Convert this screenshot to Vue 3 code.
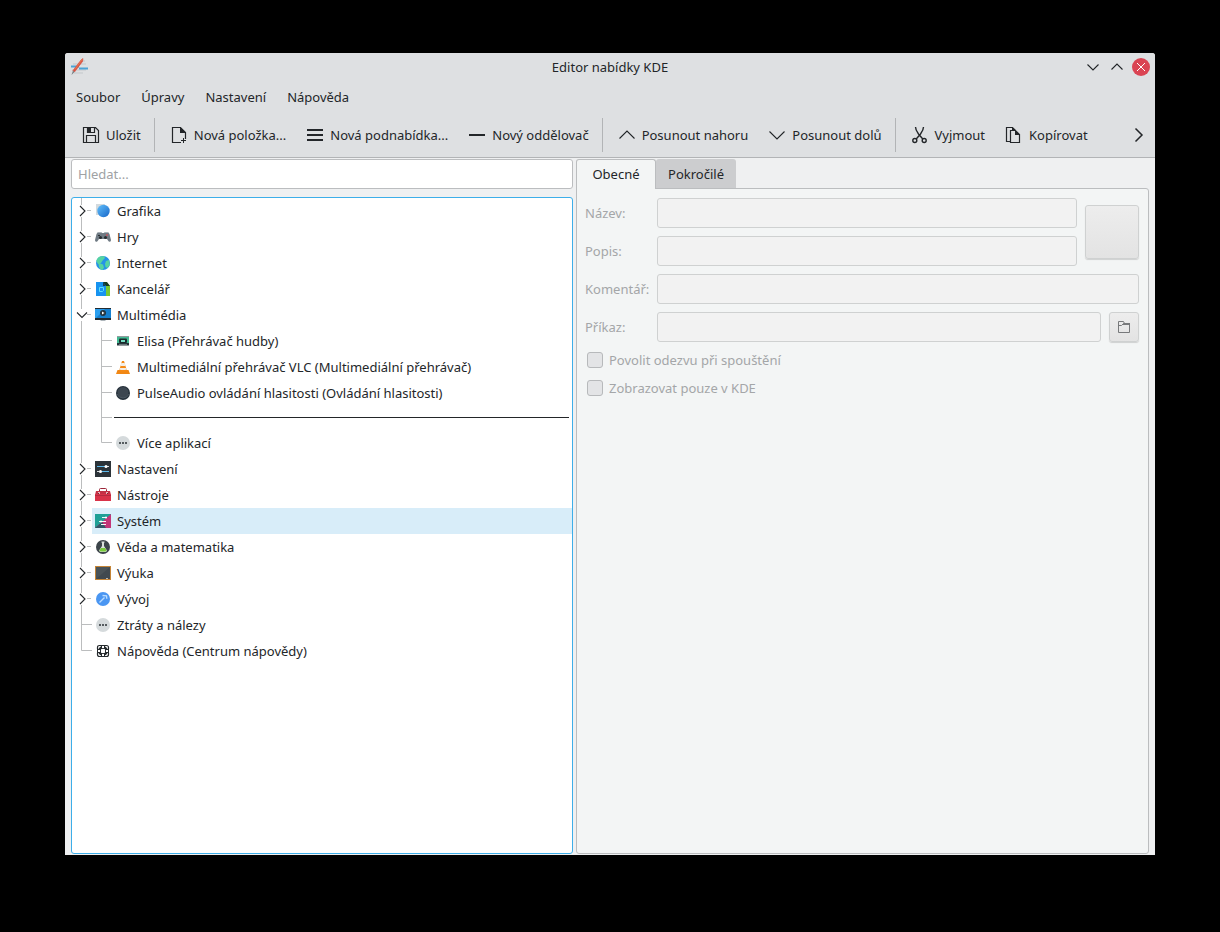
<script setup>
import { ref } from 'vue'

const art = {
  save: '<path d="M3.500 3.500h12l3 3v12h-15zM7.500 3.500v5h7v-5M6.500 18.500v-7h9v7" fill="none" stroke="#232629" stroke-width="1.200"/><path d="M7 3h4v5H7z" fill="#232629"/>',
  newItem: '<path d="M13 18.500H4.500v-15h8l5 5V15" fill="none" stroke="#232629" stroke-width="1.200"/><path d="M12 3l6 6h-6zM15 14h1v5h-1zM13 16h5v1h-5z" fill="#232629"/>',
  submenu: '<path d="M3 5h16v2H3zM3 10h16v2H3zM3 15h16v2H3z" fill="#232629"/>',
  line: '<path d="M3 10h16v2H3z" fill="#232629"/>',
  up: '<path d="M3.500 14.500L11 7l7.500 7.500" fill="none" stroke="#232629" stroke-width="1.100"/>',
  down: '<path d="M3.500 7.500L11 15l7.500-7.500" fill="none" stroke="#232629" stroke-width="1.100"/>',
  cut: '<g fill="none" stroke="#232629" stroke-width="1.400"><circle cx="5.800" cy="16.500" r="2"/><circle cx="15.200" cy="16.500" r="2"/><path d="M6.500 3c0 3 1.500 5 3 7l4.300 5M14.500 3c0 3-1.500 5-3 7l-4.300 5"/></g>',
  copy: '<path d="M7 17.500H3.500v-14h6l3 3M7.500 6.500h5l4 4v8h-9z" fill="none" stroke="#232629" stroke-width="1.200"/><path d="M12 6l5 5h-5zM9 3l4 4H9z" fill="#232629"/>',
  graphics: '<defs><linearGradient id="gBall" x1="0" y1="0" x2="1" y2="1"><stop offset="0" stop-color="#62c0fb"/><stop offset="1" stop-color="#1766c9"/></linearGradient></defs><path d="M1 1h9v11H1z" fill="#d3dade"/><circle cx="8.500" cy="8" r="6.200" fill="url(#gBall)"/>',
  games: '<path d="M3 3h3l1 1h2l1-1h3l1.500 2L16 11c0 2-2 2.500-3 .5L12 10H4l-1 1.500c-1 2-3 1.500-3-.5L1.500 5z" fill="#707b84"/><path d="M3 3h3v1H3zM10 3h3v1h-3z" fill="#a8b0b5"/><circle cx="5.500" cy="8.500" r="1.500" fill="#272d31"/><circle cx="10.500" cy="8.500" r="1.500" fill="#272d31"/><path d="M3 6h2v1H3z" fill="#2d3337"/><circle cx="12" cy="6" r=".9" fill="#d0525c"/>',
  internet: '<circle cx="8" cy="8" r="7" fill="#2593e7"/><path d="M5 1.500l4-.5 1 2-2 2-2 3-3 1-1.700-3C2 3.500 3.500 2 5 1.500zM11 6l3-1 .5 2 .3 3-2.300 3-2-1-.5-3zM4 8l4 1.500 1 3L7.500 15C4.500 14.500 4 12 3.500 9z" fill="#55d3a2"/>',
  office: '<path d="M7 1h4l4 4v10H7z" fill="#78c832"/><path d="M7 1h5l3 4h-4z" fill="#173c24"/><path d="M1 1h7l3 4v10H1z" fill="#1793f0"/><path d="M8 1l3 4H8z" fill="#153e58"/><path d="M4.500 6.500h4v3l-1 1h-3z" fill="none" stroke="#5be1fb"/>',
  multimedia: '<path d="M0 1h16v12H0z" fill="#232b31"/><path d="M0 2h16v9H0z" fill="#2b9fef"/><path d="M1 11l9-9h6v9z" fill="#1680cf"/><path d="M6 13h4l1 1H5z" fill="#aeb6bb"/><circle cx="8" cy="6" r="3" fill="#263640"/><path d="M7 4.500v3L9.500 6z" fill="#fff"/>',
  elisa: '<path d="M2 3.500h12v9H2z" fill="#26343a"/><path d="M2 4h12v6H2z" fill="#42b992"/><rect x="4" y="5.500" width="8" height="4.500" rx="1" fill="#182a2b"/><path d="M6 7h4v2H6z" fill="#74dcc3"/><path d="M4 11h8v1H4z" fill="#697779"/>',
  vlc: '<path d="M2.500 11h11l1.500 4H1z" fill="#f18714"/><path d="M7 2h2l3 10c-1 1-7 1-8 0z" fill="#f58a16"/><path d="M6.300 4h3.400l.9 3H5.400zM4.800 9h6.400l.5 1.500c-2 .8-5.400.8-7.400 0z" fill="#f2eee8"/>',
  pulse: '<circle cx="8" cy="8" r="7" fill="#25303a"/><circle cx="8" cy="7.500" r="5.500" fill="#3c4650"/><path d="M2 9a6.500 6.500 0 0 0 12 0" fill="none" stroke="#4b5761"/>',
  more: '<circle cx="8" cy="8" r="7" fill="#d5dadc"/><path d="M4 7h2v2H4zM7 7h2v2H7zM10 7h2v2h-2z" fill="#555b5f"/>',
  settings: '<path d="M0 0h16v16H0z" fill="#2c3339"/><path d="M2 5h8v1H2zM7 10h7v1H7z" fill="#5bb9ec"/><path d="M12 5h2v1h-2zM2 10h2v1H2z" fill="#dce1e4"/><circle cx="11" cy="5.500" r="1.500" fill="#fff"/><circle cx="5.500" cy="10.500" r="1.500" fill="#fff"/>',
  tools: '<path d="M4.500 5V2.500q0-1 1-1h5q1 0 1 1V5" fill="none" stroke="#9c2538"/><path d="M1 4h14l1 4H0z" fill="#c43145"/><path d="M0 7h16v7H0z" fill="#d93349"/><path d="M0 8h16v1H0z" fill="#b32b3f"/><path d="M3 5h2v2H3zM11 5h2v2h-2z" fill="#e6b4bb"/><path d="M3 6h1v1H3zM12 6h1v1h-1z" fill="#7b2431"/>',
  system: '<path d="M0 1h16v14H0z" fill="#1fa096"/><path d="M16 1v14H0z" fill="#c33578"/><path d="M0 15l7-6 4 6z" fill="#315868"/><path d="M7 4h5v1H7zM4 8h7v1H4zM6 11h5v1H6z" fill="#f3f7f7"/><circle cx="11" cy="4.500" r="1" fill="#fff"/><circle cx="6" cy="8.500" r="1" fill="#fff"/>',
  science: '<circle cx="8" cy="8" r="7" fill="#3c444a"/><path d="M6.500 2.500h3v1L9 4v3l3 4.500-1 1.500H5l-1-1.500L7 7V4l-.5-.5z" fill="#d9e0dc"/><path d="M6 9h4l1.500 2.500-.8 1H5.300l-.8-1z" fill="#79cc3c"/>',
  education: '<path d="M0 1h16v14H0z" fill="#c48437"/><path d="M1 2h14v12H1z" fill="#4a5358"/><path d="M1 14L15 2v12z" fill="#40494f"/><path d="M11 13h2v1h-2z" fill="#b4b9bb"/>',
  development: '<circle cx="8" cy="8" r="7" fill="#4a96f2"/><path d="M4.500 11.500l5-5M7.500 4.500l4 .3.3 3" fill="none" stroke="#b9dcff" stroke-width="1.400"/>',
  help: '<circle cx="8" cy="8" r="3.600" fill="none" stroke="#24292c" stroke-width="2.600"/><path d="M6 2h4v4H6zM6 10h4v4H6zM2 6h4v4H2zM10 6h4v4h-4z" fill="#24292c"/><path d="M7 3h2v2H7zM7 11h2v2H7zM3 7h2v2H3zM11 7h2v2h-2z" fill="#fff"/><circle cx="8" cy="8" r="2.200" fill="#fff"/><path d="M2.500 6V4.500q0-2 2-2H6M10 2.500h1.500q2 0 2 2V6M13.500 10v1.500q0 2-2 2H10M6 13.500H4.500q-2 0-2-2V10" fill="none" stroke="#24292c" stroke-width="1.200"/>'
}

const menus = ['Soubor', 'Úpravy', 'Nastavení', 'Nápověda']
const tools = [
  [{ icon: 'save', text: 'Uložit' }],
  [
    { icon: 'newItem', text: 'Nová položka...' },
    { icon: 'submenu', text: 'Nová podnabídka...' },
    { icon: 'line', text: 'Nový oddělovač' }
  ],
  [
    { icon: 'up', text: 'Posunout nahoru' },
    { icon: 'down', text: 'Posunout dolů' }
  ],
  [
    { icon: 'cut', text: 'Vyjmout' },
    { icon: 'copy', text: 'Kopírovat' }
  ]
]

const items = [
  { icon: 'graphics', text: 'Grafika', expander: 'closed' },
  { icon: 'games', text: 'Hry', expander: 'closed' },
  { icon: 'internet', text: 'Internet', expander: 'closed' },
  { icon: 'office', text: 'Kancelář', expander: 'closed' },
  { icon: 'multimedia', text: 'Multimédia', expander: 'open' },
  { icon: 'elisa', text: 'Elisa (Přehrávač hudby)', child: true },
  { icon: 'vlc', text: 'Multimediální přehrávač VLC (Multimediální přehrávač)', child: true },
  { icon: 'pulse', text: 'PulseAudio ovládání hlasitosti (Ovládání hlasitosti)', child: true },
  { separator: true, text: '', child: true },
  { icon: 'more', text: 'Více aplikací', child: true, last: true },
  { icon: 'settings', text: 'Nastavení', expander: 'closed' },
  { icon: 'tools', text: 'Nástroje', expander: 'closed' },
  { icon: 'system', text: 'Systém', expander: 'closed' },
  { icon: 'science', text: 'Věda a matematika', expander: 'closed' },
  { icon: 'education', text: 'Výuka', expander: 'closed' },
  { icon: 'development', text: 'Vývoj', expander: 'closed' },
  { icon: 'more', text: 'Ztráty a nálezy' },
  { icon: 'help', text: 'Nápověda (Centrum nápovědy)', last: true }
]
const highlighted = ref('Systém')
const search = ref('')
</script>

<template>
  <div class="desktop">
    <main class="window">
      <header class="titlebar">
        <svg class="app-icon" width="18" height="18" viewBox="0 0 18 18" aria-hidden="true">
          <path d="M3 6h13M2 12h14M4 15h9M11 3h4" stroke="#c3c8cb" />
          <path d="M1 8.500h8M9 10.500h9" stroke="#4ba3d6" stroke-width="2" />
          <path d="M3 12.500L11 2l2-1.500-.5 3-8 10.500z" fill="#d9503f" stroke="#d9503f" stroke-width=".6" />
          <path d="M12.500 1L5 11.500" stroke="#e9764f" />
          <path d="M1.500 17l1.500-4.500 1.500 1.500z" fill="#777d81" />
        </svg>
        <h1>Editor nabídky KDE</h1>
        <div class="controls">
          <button aria-label="Minimalizovat">
            <svg width="18" height="18" viewBox="0 0 18 18"><path d="M3.500 6.500L9 12l5.500-5.500" fill="none" stroke="#232629" stroke-width="1.100" /></svg>
          </button>
          <button aria-label="Maximalizovat">
            <svg width="18" height="18" viewBox="0 0 18 18"><path d="M3.500 11.500L9 6l5.500 5.500" fill="none" stroke="#232629" stroke-width="1.100" /></svg>
          </button>
          <button aria-label="Zavřít">
            <svg width="18" height="18" viewBox="0 0 18 18"><circle cx="9" cy="9" r="9" fill="#da4453" /><path d="M5 5l8 8M13 5l-8 8" stroke="#fff" /></svg>
          </button>
        </div>
      </header>

      <nav class="menubar">
        <button v-for="menu in menus" :key="menu">{{ menu }}</button>
      </nav>

      <div class="toolbar" role="toolbar">
        <div v-for="(group, i) in tools" :key="i" class="group">
          <button v-for="tool in group" :key="tool.icon" class="tool">
            <svg width="22" height="22" viewBox="0 0 22 22" aria-hidden="true" v-html="art[tool.icon]"></svg>
            <span>{{ tool.text }}</span>
          </button>
        </div>
        <button class="overflow" aria-label="Další">
          <svg width="16" height="16" viewBox="0 0 16 16"><path d="M4.500 1.500L11 8l-6.500 6.500" fill="none" stroke="#232629" stroke-width="1.500" /></svg>
        </button>
      </div>

      <div class="body">
        <section class="left">
          <input v-model="search" class="search" type="text" placeholder="Hledat..." aria-label="Hledat" />
          <ul class="tree" role="tree">
            <li
              v-for="(item, i) in items"
              :key="i"
              role="treeitem"
              :class="{ short: item.separator }"
              :aria-expanded="item.expander ? item.expander === 'open' : undefined"
            >
              <svg v-if="item.child" class="branch" viewBox="0 0 20 26" width="20" height="26"><path d="M9.500 0v26" stroke="#bbbdbe" /></svg>
              <button v-if="item.expander" class="branch" :aria-label="'Rozbalit ' + item.text">
                <svg viewBox="0 0 20 26" width="20" height="26" fill="none">
                  <path d="M9.500 0v7M9.500 19v7M15 12.500h4" stroke="#bbbdbe" />
                  <path v-if="item.expander === 'open'" d="M5 10.500l5 5 5-5" stroke="#232629" stroke-width="1.100" />
                  <path v-else d="M8 8l5 5-5 5" stroke="#232629" stroke-width="1.100" />
                </svg>
              </button>
              <svg v-else class="branch" viewBox="0 0 20 26" width="20" height="26">
                <path v-if="item.last" d="M9.500 0v12.500H20" fill="none" stroke="#bbbdbe" />
                <path v-else-if="item.separator" d="M9.500 0v26M10 11.500h10" fill="none" stroke="#bbbdbe" />
                <path v-else d="M9.500 0v26M10 12.500h10" fill="none" stroke="#bbbdbe" />
              </svg>
              <hr v-if="item.separator" />
              <div v-else class="entry" :class="{ active: item.text === highlighted }">
                <svg width="16" height="16" viewBox="0 0 16 16" aria-hidden="true" v-html="art[item.icon]"></svg>
                <span>{{ item.text }}</span>
              </div>
            </li>
          </ul>
        </section>

        <section class="right">
          <div class="tabs" role="tablist">
            <button class="tab current" role="tab" aria-selected="true">Obecné</button>
            <button class="tab" role="tab" aria-selected="false">Pokročilé</button>
          </div>
          <form class="pane">
            <div class="fields">
              <label for="name">Název:</label>
              <input id="name" type="text" disabled />
              <button type="button" class="icon-button" disabled aria-label="Ikona"></button>
              <label for="description">Popis:</label>
              <input id="description" type="text" disabled />
              <label for="comment">Komentář:</label>
              <input id="comment" class="wide" type="text" disabled />
              <label for="command">Příkaz:</label>
              <input id="command" class="medium" type="text" disabled />
              <button type="button" class="file-button" disabled aria-label="Vybrat soubor">
                <svg width="16" height="16" viewBox="0 0 16 16"><path d="M2.500 13.500v-11h5l1 2h5v9zM2.500 6.500h3l2-2h2" fill="none" stroke="#77797b" /><path d="M8 4h6v2H6z" fill="#77797b" /></svg>
              </button>
            </div>
            <label class="check"><input type="checkbox" disabled /><span>Povolit odezvu při spouštění</span></label>
            <label class="check"><input type="checkbox" disabled /><span>Zobrazovat pouze v KDE</span></label>
          </form>
        </section>
      </div>
    </main>
  </div>
</template>

<style>
body {
  background: #000;
}
</style>

<style scoped>
* {
  box-sizing: border-box;
}
.desktop {
  display: flex;
  min-height: 100vh;
  padding: 53px 65px 77px;
  background: #000;
  color: #232629;
  font: 13px/20px "Noto Sans", sans-serif;
}
button {
  padding: 0;
  border: 0;
  background: none;
  color: inherit;
  font: inherit;
}
svg {
  display: block;
  flex: none;
}
.window {
  display: flex;
  flex: 1;
  flex-direction: column;
  min-width: 0;
  overflow: hidden;
  border-radius: 3px 3px 0 0;
  background: #eff0f1;
}
.titlebar {
  display: grid;
  grid-template-columns: 1fr auto 1fr;
  align-items: center;
  height: 28px;
  padding: 0 5px;
  background: #dee0e2;
}
h1 {
  margin: 0;
  font-size: 13px;
  font-weight: 400;
}
.controls {
  display: flex;
  gap: 6px;
  justify-content: flex-end;
}
.menubar {
  display: flex;
  height: 32px;
  padding-left: 1px;
  background: #dee0e2;
}
.menubar button {
  padding: 0 11px 0 10px;
}
.toolbar {
  display: flex;
  align-items: center;
  height: 45px;
  padding: 0 8px 0 6px;
  border-bottom: 1px solid #b2b4b6;
  background: #dee0e2;
}
.group {
  display: flex;
  align-items: center;
  height: 34px;
}
.group + .group {
  margin-left: 4px;
  padding-left: 4px;
  border-left: 1px solid #b2b4b6;
}
.tool {
  display: flex;
  gap: 4px;
  align-items: center;
  padding: 0 9px;
  white-space: nowrap;
}
.overflow {
  margin-left: auto;
}
.body {
  display: grid;
  flex: 1;
  grid-template-columns: 502fr 573fr;
  gap: 3px;
  padding: 1px 6px;
}
.left,
.right {
  display: flex;
  flex-direction: column;
  min-width: 0;
}
.search {
  height: 30px;
  padding: 0 6px;
  border: 1px solid #bbbdbf;
  border-radius: 3px;
  outline: none;
  background: #fff;
  color: inherit;
  font: inherit;
}
.search::placeholder {
  color: #a0a2a4;
  opacity: 1;
}
.tree {
  flex: 1;
  margin: 8px 0 0;
  padding: 0;
  border: 1px solid #3daee9;
  border-radius: 3px;
  background: #fff;
  list-style: none;
}
.tree li {
  display: flex;
  height: 26px;
  overflow: hidden;
}
.tree .short {
  height: 24px;
}
.branch {
  flex: none;
  width: 20px;
}
.entry {
  display: flex;
  flex: 1;
  gap: 6px;
  align-items: center;
  padding-left: 3px;
  white-space: nowrap;
}
.active {
  background: #d8edf9;
}
hr {
  flex: 1;
  height: 1px;
  margin: 11px 3px 0 2px;
  border: 0;
  background: #232629;
}
.tabs {
  display: flex;
  height: 30px;
}
.tab {
  width: 80px;
  height: 29px;
  border-radius: 3px 3px 0 0;
  background: #cccdcf;
}
.tab.current {
  position: relative;
  height: 30px;
  padding-bottom: 2px;
  border: 1px solid #bbbdbf;
  border-bottom: 0;
  background: #f3f5f5;
}
.pane {
  flex: 1;
  margin-top: -1px;
  padding: 9px 9px 8px 8px;
  border: 1px solid #bbbdbf;
  border-radius: 0 3px 3px 3px;
  background: #f3f5f5;
  color: #a4a6a8;
}
.fields {
  display: grid;
  grid-template-columns: 64px 1fr 16px 30px;
  grid-auto-rows: 30px;
  gap: 8px;
  align-items: center;
}
.fields input {
  width: 100%;
  height: 30px;
  border: 1px solid #cfd1d1;
  border-radius: 3px;
  background: #f2f2f2;
  font: inherit;
}
.fields .wide {
  grid-column: 2 / 5;
}
.fields .medium {
  grid-column: 2 / 4;
}
.icon-button,
.file-button {
  display: flex;
  align-items: center;
  justify-content: center;
  border: 1px solid #cfd1d1;
  border-radius: 3px;
  background: linear-gradient(#ededed, #e3e3e3);
  box-shadow: 0 1px 1px #cfd1d1;
}
.icon-button {
  grid-row: 1 / 3;
  grid-column: 3 / 5;
  height: 54px;
}
.file-button {
  height: 30px;
}
.check {
  display: flex;
  gap: 6px;
  align-items: center;
  height: 28px;
  padding-left: 2px;
}
.fields + .check {
  margin-top: 4px;
}
.check input {
  width: 16px;
  height: 16px;
  margin: 0;
  border: 1px solid #b7b9bb;
  border-radius: 3px;
  background: #e3e4e6;
  appearance: none;
}
</style>
